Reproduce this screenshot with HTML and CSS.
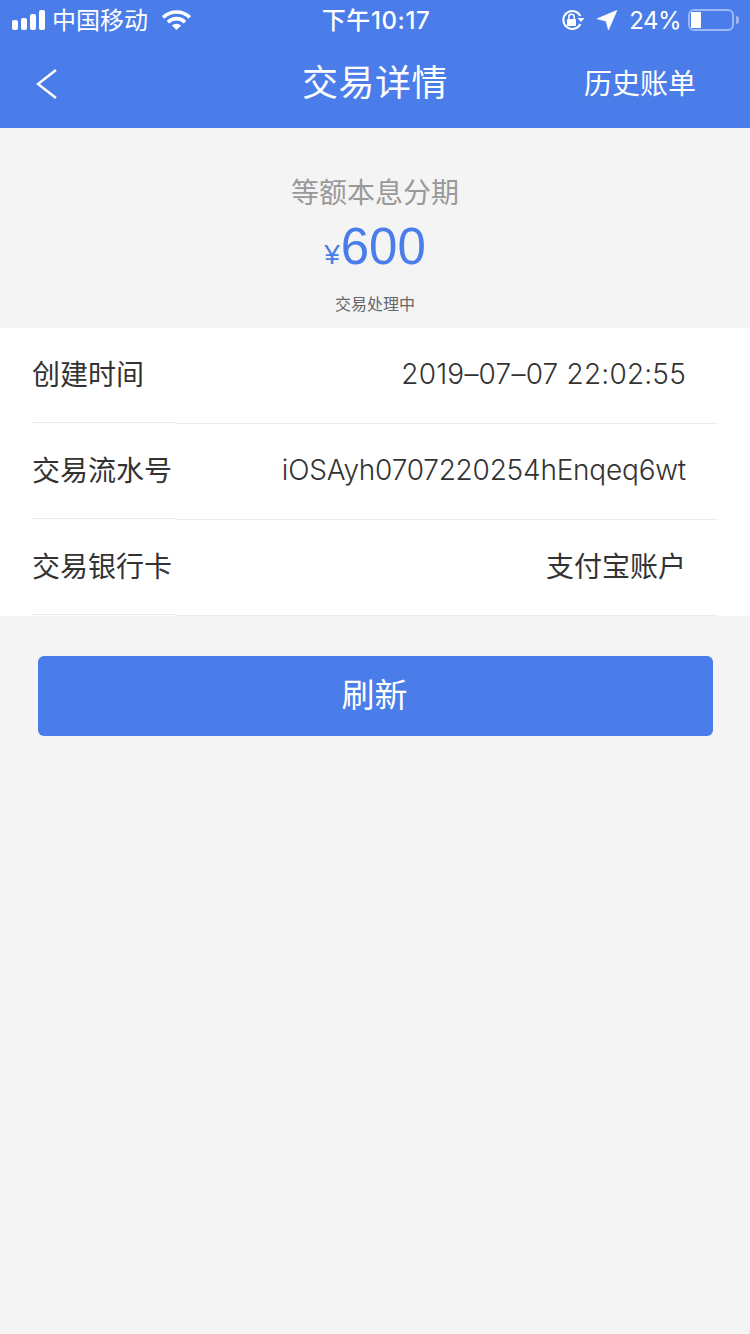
FILE: index.html
```html
<!DOCTYPE html>
<html lang="zh">
<head>
    <meta charset="utf-8">
    <title>交易详情</title>
    <link rel="stylesheet" href="styles.css">
</head>
<body>
    <div class="top">
        <div class="status">
            <div class="status-left">
                <div class="signal"><i class="s1"></i><i class="s2"></i><i class="s3"></i><i class="s4"></i></div>
                <span class="carrier">中国移动</span>
                <svg class="wifi" width="29" height="20" viewBox="0 0 29 20">
                    <path d="M1.2 7.4 A19 19 0 0 1 27.8 7.4" fill="none" stroke="#fff" stroke-width="3.6"/>
                    <path d="M6 12.2 A12 12 0 0 1 23 12.2" fill="none" stroke="#fff" stroke-width="3.6"/>
                    <path d="M9.8 15.6 A7 7 0 0 1 19.2 15.6 L14.5 20 Z" fill="#fff"/>
                </svg>
            </div>
            <div class="clock">下午10:17</div>
            <div class="status-right">
                <svg class="lock" width="24" height="22" viewBox="0 0 24 22">
                    <path d="M19.4 7 A9 9 0 1 0 19.4 15" fill="none" stroke="#fff" stroke-width="2"/>
                    <path d="M16.5 9 L23.5 9 L20 13 Z" fill="#fff"/>
                    <rect x="6" y="10" width="9" height="7" rx="1" fill="#fff"/>
                    <path d="M7.8 10 V8 A2.7 2.7 0 0 1 13.2 8 V10" fill="none" stroke="#fff" stroke-width="1.5"/>
                </svg>
                <svg class="arrow" width="20" height="20" viewBox="0 0 20 20">
                    <path d="M19.8 0.5 L11.5 19.8 L9 11 L0.2 8.8 Z" fill="#fff" stroke="#fff" stroke-width="0.8" stroke-linejoin="round"/>
                </svg>
                <span class="percent">24%</span>
                <div class="battery"><div class="level"></div></div>
                <div class="battery-tip"></div>
            </div>
        </div>
        <div class="nav">
            <div class="nav-back">
                <svg width="24" height="32" viewBox="0 0 24 32">
                    <path d="M21 2 L3 16 L21 30" fill="none" stroke="#fff" stroke-width="2.4"/>
                </svg>
            </div>
            <div class="nav-title">交易详情</div>
            <div class="nav-link">历史账单</div>
        </div>
    </div>

    <div class="summary">
        <div class="summary-type">等额本息分期</div>
        <div class="summary-amount"><span class="yen">¥</span>600</div>
        <div class="summary-state">交易处理中</div>
    </div>

    <div class="list">
        <div class="row">
            <div class="row-label">创建时间</div>
            <div class="row-value row-value-date">2019–07–07 22:02:55</div>
        </div>
        <div class="row">
            <div class="row-label">交易流水号</div>
            <div class="row-value row-value-id">iOSAyh0707220254hEnqeq6wt</div>
        </div>
        <div class="row">
            <div class="row-label">交易银行卡</div>
            <div class="row-value">支付宝账户</div>
        </div>
    </div>

    <div class="actions">
        <div class="btn">刷新</div>
    </div>
</body>
</html>
```

FILE: styles.css
```css
html, body {
    margin: 0;
    padding: 0;
}

body {
    width: 750px;
    height: 1334px;
    overflow: hidden;
    background: #f4f4f4;
    font-family: Inter, "Noto Sans CJK SC", sans-serif;
    color: #333;
}

.top {
    background: #4a7de9;
    color: #fff;
}

.status {
    height: 40px;
    display: flex;
    align-items: center;
    justify-content: space-between;
    position: relative;
    padding: 0 11px 0 12px;
    font-size: 24px;
    line-height: 40px;
}

.status-left,
.status-right {
    display: flex;
    align-items: center;
}

.signal {
    display: flex;
    align-items: flex-end;
    gap: 3px;
    height: 20px;
    margin-right: 8px;
}

.signal i {
    display: block;
    width: 6px;
    background: #fff;
    border-radius: 2px;
}

.s1 { height: 10px; }
.s2 { height: 12px; }
.s3 { height: 16px; }
.s4 { height: 20px; }

.carrier {
    margin-right: 14px;
    margin-left: -1px;
    margin-top: 2px;
}

.clock {
    position: absolute;
    left: 2px;
    right: 0;
    text-align: center;
    font-weight: 500;
    top: 1px;
    letter-spacing: 0.6px;
}

.lock {
    margin-right: 12px;
}

.arrow {
    margin-right: 12px;
}

.percent {
    margin-right: 7px;
    margin-top: 2px;
    letter-spacing: -0.5px;
}

.battery {
    width: 46px;
    height: 22px;
    box-sizing: border-box;
    border: 2px solid rgba(255, 255, 255, 0.45);
    border-radius: 6px;
    padding: 0 0 0 1px;
    display: flex;
    align-items: center;
}

.level {
    width: 10px;
    height: 16px;
    background: #fff;
    border-radius: 1px;
}

.battery-tip {
    width: 3px;
    height: 8px;
    margin-left: 2px;
    background: rgba(255, 255, 255, 0.45);
    border-radius: 0 3px 3px 0;
}

.nav {
    height: 88px;
    display: flex;
    align-items: center;
    position: relative;
}

.nav-back {
    margin-left: 35px;
    height: 32px;
    margin-top: -1px;
}

.nav-title {
    position: absolute;
    left: 0;
    right: 0;
    text-align: center;
    font-size: 36px;
    letter-spacing: 0.5px;
    line-height: 48px;
    top: 19px;
}

.nav-link {
    margin-left: auto;
    margin-right: 54px;
    font-size: 28px;
    line-height: 40px;
    margin-top: 0;
}

.summary {
    height: 200px;
    box-sizing: border-box;
    padding-top: 47px;
    text-align: center;
}

.summary-type {
    font-size: 28px;
    line-height: 36px;
    color: #999;
}

.summary-amount {
    font-family: "Liberation Sans", "Noto Sans CJK SC", sans-serif;
    font-size: 51px;
    line-height: 60px;
    margin-top: 6px;
    color: #4a7de9;
}

.yen {
    font-size: 28px;
    margin-right: 1px;
}

.summary-state {
    font-size: 16px;
    line-height: 24px;
    margin-top: 7px;
    color: #666;
}

.list {
    background: #fff;
    padding: 0 32px;
}

.row {
    display: flex;
    height: 96px;
    font-size: 28px;
}

.row-label {
    width: 144px;
    height: 95px;
    box-sizing: border-box;
    line-height: 94px;
    border-bottom: 1px solid #ececec;
}

.row-value {
    flex: 1;
    box-sizing: border-box;
    text-align: right;
    line-height: 94px;
    padding-right: 32px;
    border-bottom: 1px solid #ececec;
}

.row-value-date {
    font-weight: 300;
    letter-spacing: 0.2px;
    line-height: 93px;
}

.row-value-id {
    font-weight: 300;
    letter-spacing: -0.22px;
    line-height: 93px;
}

.actions {
    padding: 40px 37px 0 38px;
}

.btn {
    height: 80px;
    line-height: 78px;
    box-sizing: border-box;
    padding-right: 2px;
    background: #4a7de9;
    border-radius: 6px;
    color: #fff;
    text-align: center;
    font-size: 33px;
}
```
